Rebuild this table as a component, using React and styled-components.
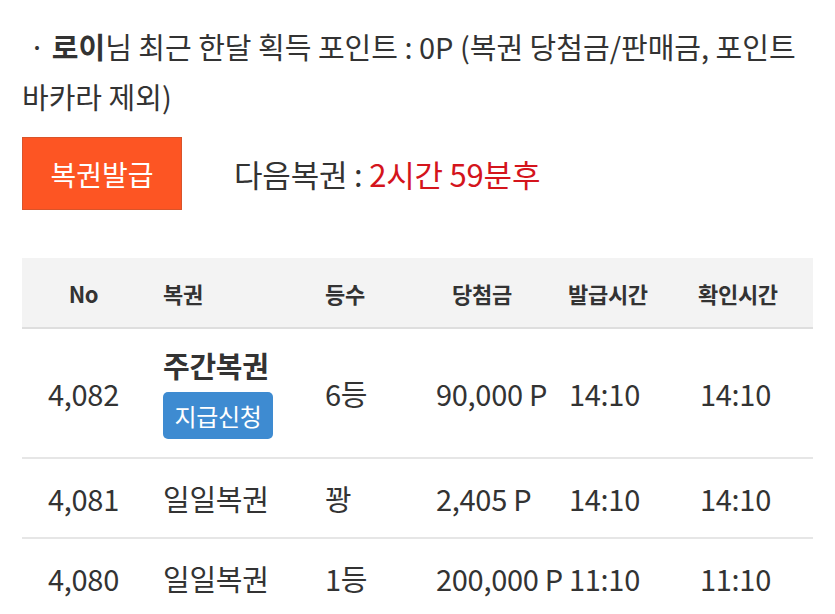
import React from "react";
import styled, { createGlobalStyle } from "styled-components";

const GlobalStyle = createGlobalStyle`
  body {
    margin: 0;
    background: #fff;
    font-family: "Noto Sans CJK KR", "Noto Sans", sans-serif;
    color: #333;
  }
`;

const Page = styled.div`
  padding: 21px 22px 0 22px;
`;

const Notice = styled.p`
  margin: 0;
  font-size: 29px;
  line-height: 50px;
  text-indent: 7px;
  color: #333;
`;

const Name = styled.b`
  font-weight: 700;
`;

const TicketBar = styled.div`
  display: flex;
  align-items: center;
  gap: 52px;
  margin-top: 16px;
`;

const IssueButton = styled.button`
  width: 160px;
  height: 73px;
  background: #fd5523;
  border: 1px solid #d9542a;
  color: #fff;
  font-family: inherit;
  font-size: 28px;
  padding: 0;
`;

const NextTicket = styled.div`
  font-size: 31px;
  color: #333;
  letter-spacing: -0.2px;
`;

const Remain = styled.span`
  color: #d4141c;
`;

const Table = styled.div`
  margin-top: 48px;
  display: grid;
  grid-template-columns: 123px 152px 100px 171px 130px 115px;
`;

const HeadRow = styled.div`
  display: contents;
`;

const HeadCell = styled.div`
  background: #f3f3f3;
  height: 69px;
  border-bottom: 2px solid #dedede;
  display: flex;
  align-items: center;
  justify-content: ${(p) => (p.$center ? "center" : "flex-start")};
  padding-left: ${(p) => p.$pl || 0}px;
  font-size: 22px;
  font-weight: 700;
  letter-spacing: -0.3px;
  color: #333;
  white-space: nowrap;
`;

const Row = styled.div`
  display: contents;
`;

const Cell = styled.div`
  height: ${(p) => p.$h}px;
  border-bottom: 2px solid #e6e6e6;
  display: flex;
  flex-direction: column;
  justify-content: center;
  align-items: ${(p) => (p.$center ? "center" : "flex-start")};
  padding-left: ${(p) => p.$pl || 0}px;
  font-size: 29px;
  letter-spacing: -0.3px;
  color: #333;
  white-space: nowrap;
  box-sizing: border-box;
  overflow: visible;
`;

const Kind = styled.div`
  font-weight: 700;
  line-height: 34px;
`;

const PayButton = styled.button`
  margin-top: 10px;
  width: 110px;
  height: 47px;
  border: none;
  border-radius: 5px;
  background: #3e8bd1;
  color: #fff;
  font-family: inherit;
  font-size: 24px;
  letter-spacing: -0.3px;
  padding: 0;
`;

const rows = [
  { no: "4,082", kind: "주간복권", weekly: true, rank: "6등", prize: "90,000 P", issued: "14:10", checked: "14:10", h: 130 },
  { no: "4,081", kind: "일일복권", rank: "꽝", prize: "2,405 P", issued: "14:10", checked: "14:10", h: 80 },
  { no: "4,080", kind: "일일복권", rank: "1등", prize: "200,000 P", issued: "11:10", checked: "11:10", h: 80 },
];

export default function App() {
  return (
    <Page>
      <GlobalStyle />
      <Notice>
        · <Name>로이</Name>님 최근 한달 획득 포인트 : 0P (복권 당첨금/판매금, 포인트 바카라 제외)
      </Notice>
      <TicketBar>
        <IssueButton>복권발급</IssueButton>
        <NextTicket>
          다음복권 : <Remain>2시간 59분후</Remain>
        </NextTicket>
      </TicketBar>
      <Table>
        <HeadRow>
          <HeadCell $center>No</HeadCell>
          <HeadCell $pl={18}>복권</HeadCell>
          <HeadCell $pl={28}>등수</HeadCell>
          <HeadCell $pl={55}>당첨금</HeadCell>
          <HeadCell $pl={0}>발급시간</HeadCell>
          <HeadCell $pl={0}>확인시간</HeadCell>
        </HeadRow>
        {rows.map((r) => (
          <Row key={r.no}>
            <Cell $h={r.h} $center>{r.no}</Cell>
            <Cell $h={r.h} $pl={18}>
              {r.weekly ? (
                <>
                  <Kind>{r.kind}</Kind>
                  <PayButton>지급신청</PayButton>
                </>
              ) : (
                r.kind
              )}
            </Cell>
            <Cell $h={r.h} $pl={28}>{r.rank}</Cell>
            <Cell $h={r.h} $pl={39}>{r.prize}</Cell>
            <Cell $h={r.h} $pl={1}>{r.issued}</Cell>
            <Cell $h={r.h} $pl={2}>{r.checked}</Cell>
          </Row>
        ))}
      </Table>
    </Page>
  );
}
